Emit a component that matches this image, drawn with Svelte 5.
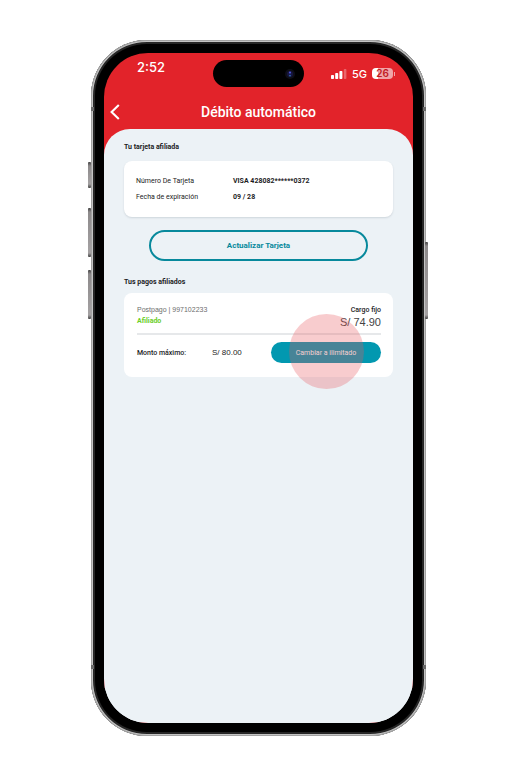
<script>
  const card = [
    { label: 'Número De Tarjeta', value: 'VISA 428082******0372' },
    { label: 'Fecha de expiración', value: '09 / 28' }
  ];
  const payment = {
    service: 'Postpago | 997102233',
    status: 'Afiliado',
    amount: 'S/ 74.90',
    limit: 'S/ 80.00'
  };
</script>

<main class="stage">
  <div class="phone">
    <span class="key mute"></span>
    <span class="key up"></span>
    <span class="key down"></span>
    <span class="key power"></span>
    <span class="band left top"></span>
    <span class="band right top"></span>
    <span class="band left bottom"></span>
    <span class="band right bottom"></span>

    <div class="screen">
      <header>
        <div class="status">
          <span class="time">2:52</span>
          <span class="island">
            <svg width="12" height="12" viewBox="0 0 12 12" aria-hidden="true">
              <circle cx="6" cy="6" r="5" fill="#0e0e16" />
              <circle cx="6" cy="6" r="3" fill="#161640" />
              <circle cx="6" cy="4.6" r="1.1" fill="#4a4fd0" />
              <circle cx="6" cy="7.6" r="0.9" fill="#2f66b0" />
            </svg>
          </span>
          <span class="radio">
            <svg width="16" height="10" viewBox="0 0 16 10" aria-hidden="true">
              <rect x="0" y="6" width="3" height="4" rx="0.8" fill="#fff" />
              <rect x="4.2" y="4" width="3" height="6" rx="0.8" fill="#fff" />
              <rect x="8.4" y="2" width="3" height="8" rx="0.8" fill="#fff" />
              <rect x="12.8" y="0" width="2.6" height="10" rx="0.8" fill="#fff" opacity="0.3" />
            </svg>
            <span class="net">5G</span>
            <span class="battery"><span class="level">26</span></span>
          </span>
        </div>
        <div class="titlebar">
          <button class="back" type="button" aria-label="Atrás">
            <svg width="10" height="16" viewBox="0 0 10 16" aria-hidden="true">
              <path d="M8.8 1 1.6 8l7.2 7" fill="none" stroke="#fff" stroke-width="2.1" />
            </svg>
          </button>
          <h1>Débito automático</h1>
        </div>
      </header>

      <section class="sheet">
        <h2>Tu tarjeta afiliada</h2>
        <dl class="panel details">
          {#each card as row}
            <div class="row">
              <dt>{row.label}</dt>
              <dd>{row.value}</dd>
            </div>
          {/each}
        </dl>

        <button class="outline" type="button">Actualizar Tarjeta</button>

        <h2 class="second">Tus pagos afiliados</h2>
        <article class="panel payment">
          <div class="summary">
            <div>
              <p class="service">{payment.service}</p>
              <p class="state">{payment.status}</p>
            </div>
            <div class="charge">
              <p class="kind">Cargo fijo</p>
              <p class="amount">{payment.amount}</p>
            </div>
          </div>
          <div class="limit">
            <span class="max">Monto máximo:</span>
            <span class="value">{payment.limit}</span>
            <button class="solid" type="button">
              Cambiar a ilimitado
              <span class="touch"></span>
            </button>
          </div>
        </article>
      </section>
    </div>
  </div>
</main>

<style>
  :global(body) {
    background: #fff;
  }
  * {
    box-sizing: border-box;
  }
  h1, h2, p, dl, dd, dt {
    margin: 0;
  }
  button {
    font-family: inherit;
    cursor: pointer;
  }
  svg {
    display: block;
  }
  .stage {
    display: flex;
    min-height: 100vh;
    padding: 40px 90px 41px 91px;
    font-family: Roboto, 'Liberation Sans', sans-serif;
    color: #1c1c1e;
  }
  .phone {
    position: relative;
    display: flex;
    flex: 1;
    padding: 13px;
    border-radius: 56px;
    background: #000;
    box-shadow: inset 0 0 0 1px #a2a2a2, inset 0 0 0 2px #c4c4c4, inset 0 0 0 4px #262626;
  }
  .key {
    position: absolute;
    width: 3px;
    border-radius: 1px;
    background: linear-gradient(#444, #8d8a8b 4px, #a5a2a3 calc(100% - 4px), #444);
  }
  .mute {
    left: -3px;
    top: 122px;
    height: 26px;
  }
  .up {
    left: -3px;
    top: 168px;
    height: 49px;
  }
  .down {
    left: -3px;
    top: 230px;
    height: 49px;
  }
  .power {
    right: -2px;
    top: 202px;
    height: 77px;
  }
  .band {
    position: absolute;
    width: 3px;
    height: 4px;
    background: #6a6a6a;
  }
  .band.left {
    left: 0;
  }
  .band.right {
    right: 0;
  }
  .band.top {
    top: 67px;
  }
  .band.bottom {
    bottom: 67px;
  }
  .screen {
    display: flex;
    flex-direction: column;
    flex: 1;
    border-radius: 44px;
    overflow: hidden;
    background: linear-gradient(#e2232a 120px, #ecf2f6 120px);
  }
  .status {
    display: grid;
    grid-template-columns: 1fr 91px 1fr;
    padding-top: 7px;
    color: #fff;
    font-family: Inter, sans-serif;
  }
  .time {
    padding-left: 33px;
    font-size: 13px;
    line-height: 15px;
    font-weight: 500;
  }
  .island {
    display: flex;
    align-items: center;
    justify-content: flex-end;
    height: 27px;
    padding-right: 8px;
    border-radius: 14px;
    background: #000;
  }
  .radio {
    display: flex;
    align-items: center;
    justify-content: flex-end;
    height: 27px;
    padding-right: 20px;
  }
  .net {
    margin: 0 5px;
    font-size: 11px;
    line-height: 12px;
    font-weight: 500;
  }
  .battery {
    position: relative;
    width: 21px;
    height: 11px;
    border-radius: 4px;
    background: linear-gradient(90deg, #fff 6px, #f0a4a7 6px);
    color: #c01a22;
    font-size: 10px;
    line-height: 11px;
    font-weight: 600;
    text-align: center;
  }
  .battery::after {
    content: '';
    position: absolute;
    left: 22px;
    top: 4px;
    width: 1px;
    height: 4px;
    background: #f0a4a7;
  }
  .titlebar {
    display: grid;
    grid-template-columns: 24px 1fr 24px;
    align-items: center;
    height: 42px;
    padding-top: 7px;
  }
  .back {
    padding: 0 0 0 6px;
    border: 0;
    background: none;
  }
  h1 {
    font-size: 14px;
    line-height: 18px;
    font-weight: 500;
    color: #fff;
    text-align: center;
  }
  .sheet {
    flex: 1;
    padding: 14px 20px 20px;
    border-radius: 26px 26px 0 0;
    background: #ecf2f6;
    box-shadow: 0 -30px 0 30px #e2232a;
    clip-path: inset(0);
  }
  h2 {
    font-size: 7px;
    line-height: 9px;
    font-weight: 700;
  }
  .panel {
    border-radius: 8px;
    background: #fff;
  }
  .details {
    margin-top: 9px;
    padding: 12px;
    box-shadow: 0 1px 2px #cdd5db;
  }
  .row {
    display: flex;
    font-size: 7px;
    line-height: 16px;
  }
  dt {
    width: 97px;
  }
  dd {
    font-weight: 700;
  }
  .outline {
    display: block;
    width: calc(100% - 50px);
    height: 31px;
    margin: 13px auto 0;
    border: 2px solid #07899c;
    border-radius: 16px;
    background: none;
    color: #07899c;
    font-size: 8px;
    font-weight: 700;
  }
  .second {
    margin: 17px 0 6px;
  }
  .payment {
    padding: 12px 12px 14px 13px;
  }
  .summary {
    display: flex;
    justify-content: space-between;
    height: 30px;
    border-bottom: 2px solid #e6e8ea;
  }
  .service {
    color: #6d6d6d;
    font: 7px/10px 'Liberation Sans', sans-serif;
  }
  .state {
    color: #6bce28;
    font-size: 7px;
    line-height: 12px;
    font-weight: 700;
  }
  .charge {
    text-align: right;
  }
  .kind {
    font-size: 7px;
    line-height: 10px;
    font-weight: 500;
  }
  .amount {
    color: #444;
    font: 11px/14px 'Liberation Sans', sans-serif;
  }
  .limit {
    display: flex;
    align-items: center;
    margin-top: 7px;
  }
  .max {
    width: 75px;
    font-size: 7px;
    font-weight: 500;
  }
  .value {
    flex: 1;
    font: 8px/10px 'Liberation Sans', sans-serif;
  }
  .solid {
    position: relative;
    width: 110px;
    height: 21px;
    padding: 0;
    border: 0;
    border-radius: 11px;
    background: #0298b0;
    color: #fff;
    font-size: 7px;
  }
  .touch {
    position: absolute;
    left: 18px;
    top: -28px;
    width: 75px;
    height: 75px;
    border-radius: 50%;
    background: rgb(231 85 92 / 30%);
    pointer-events: none;
  }
</style>
